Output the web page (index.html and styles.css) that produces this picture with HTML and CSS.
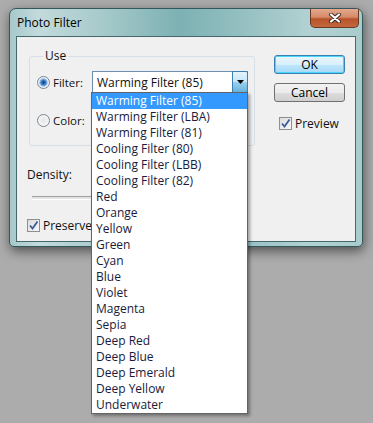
FILE: index.html
```html
<!DOCTYPE html>
<html lang="en">
<head>
    <meta charset="UTF-8">
    <title>Photo Filter</title>
    <link rel="stylesheet" href="styles.css">
</head>
<body>
    <div class="window">
        <div class="titlebar">
            <span class="title">Photo Filter</span>
            <button class="close-button">
                <svg width="12" height="10" viewBox="0 0 12 10">
                    <path d="M2 1.5 L10 8.5 M10 1.5 L2 8.5" stroke="#3a2a24" stroke-width="4" stroke-linecap="round"/>
                    <path d="M2 1.5 L10 8.5 M10 1.5 L2 8.5" stroke="#fff" stroke-width="2.2" stroke-linecap="round"/>
                </svg>
            </button>
        </div>

        <div class="client">
            <div class="left-column">
                <fieldset class="group">
                    <legend>Use</legend>
                    <div class="option-row">
                        <span class="radio checked"></span>
                        <span class="option-label">Filter:</span>
                        <div class="combo">
                            <span class="combo-value">Warming Filter (85)</span>
                            <span class="combo-button">
                                <svg width="7" height="4" viewBox="0 0 7 4"><path d="M0 0 H7 L3.5 4 Z" fill="#000"/></svg>
                            </span>
                            <ul class="combo-list">
                                <li class="selected">Warming Filter (85)</li>
                                <li>Warming Filter (LBA)</li>
                                <li>Warming Filter (81)</li>
                                <li>Cooling Filter (80)</li>
                                <li>Cooling Filter (LBB)</li>
                                <li>Cooling Filter (82)</li>
                                <li>Red</li>
                                <li>Orange</li>
                                <li>Yellow</li>
                                <li>Green</li>
                                <li>Cyan</li>
                                <li>Blue</li>
                                <li>Violet</li>
                                <li>Magenta</li>
                                <li>Sepia</li>
                                <li>Deep Red</li>
                                <li>Deep Blue</li>
                                <li>Deep Emerald</li>
                                <li>Deep Yellow</li>
                                <li>Underwater</li>
                            </ul>
                        </div>
                    </div>
                    <div class="option-row second">
                        <span class="radio"></span>
                        <span class="option-label">Color:</span>
                    </div>
                </fieldset>

                <div class="density-label">Density:</div>
                <div class="slider"><div class="slider-track"></div></div>

                <label class="check-row preserve">
                    <span class="checkbox">
                        <svg width="11" height="11" viewBox="0 0 11 11"><path d="M2 5.5 L4.5 8.5 L9.5 1.5" stroke="#3d5a9c" stroke-width="1.8" fill="none"/></svg>
                    </span>
                    Preserve
                </label>
            </div>

            <div class="right-column">
                <button class="dialog-button default">OK</button>
                <button class="dialog-button">Cancel</button>
                <label class="check-row preview">
                    <span class="checkbox">
                        <svg width="11" height="11" viewBox="0 0 11 11"><path d="M2 5.5 L4.5 8.5 L9.5 1.5" stroke="#3d5a9c" stroke-width="1.8" fill="none"/></svg>
                    </span>
                    Preview
                </label>
            </div>
        </div>
    </div>
</body>
</html>
```

FILE: styles.css
```css
html {
    background: #acacac;
}
body {
    margin: 0;
    min-height: 100vh;
    font-family: "Open Sans", "Noto Sans", sans-serif;
    font-size: 11.5px;
    color: #111;
}
.window {
    box-sizing: border-box;
    width: 354px;
    height: 239px;
    margin: 8px 0 0 9px;
    padding: 0 6px 4px 6px;
    border: 1px solid #33575a;
    border-radius: 7px 7px 5px 5px;
    background: linear-gradient(90deg, #a6c9ca 0%, #c2dadb 8%, #a9cbcc 25%, #7db1b3 48%, #8fbcbe 62%, #b2d1d2 85%, #a9cbcc 100%);
    box-shadow: 1px 4px 12px rgba(0, 0, 0, 0.55);
    display: flex;
    flex-direction: column;
}
.titlebar {
    height: 27px;
    display: flex;
    align-items: center;
    justify-content: space-between;
}
.title {
    padding-left: 1px;
    font-size: 12px;
    color: #000;
}
.close-button {
    align-self: flex-start;
    width: 49px;
    height: 19px;
    margin-right: -3px;
    padding: 0;
    border: 1px solid #6a3a26;
    border-top: none;
    border-radius: 0 0 5px 5px;
    background: linear-gradient(#e3a98f 0%, #d48a68 45%, #b8532a 55%, #c4673c 100%);
    display: flex;
    align-items: center;
    justify-content: center;
}
.client {
    box-sizing: border-box;
    height: 206px;
    border: 1px solid #44686b;
    background: #f0f0f0;
    display: flex;
}
.left-column {
    padding-left: 10px;
    width: 228px;
}
.group {
    box-sizing: border-box;
    width: 226px;
    margin: 11px 0 0 2px;
    padding: 7px 6px 14px 7px;
    border: 1px solid #d5dfe5;
    border-radius: 3px;
}
.group legend {
    margin-left: 6px;
    padding: 0 2px;
    line-height: 16px;
    font-size: 12px;
}
.option-row {
    height: 22px;
    display: flex;
    align-items: center;
}
.option-row.second {
    margin-top: 16px;
}
.radio {
    box-sizing: border-box;
    width: 13px;
    height: 13px;
    border: 1px solid #7b8590;
    border-radius: 50%;
    background: radial-gradient(circle, #e6e6e6 0%, #f6f6f6 70%);
}
.radio.checked {
    background: radial-gradient(circle, #1b3a6e 0%, #2f6fbf 25%, #7db2e6 45%, #eef2f6 60%);
}
.option-label {
    width: 39px;
    margin-left: 3px;
}
.combo {
    position: relative;
    box-sizing: border-box;
    width: 156px;
    height: 22px;
    border: 1px solid #6d8fb0;
    background: #fff;
    display: flex;
    align-items: center;
}
.combo-value {
    flex: 1;
    padding-left: 4px;
    font-size: 12px;
}
.combo-button {
    box-sizing: border-box;
    width: 16px;
    height: 22px;
    margin: -1px -1px -1px 0;
    border: 1px solid #3c7fb1;
    border-radius: 0 2px 2px 0;
    background: linear-gradient(#e5f4fc 0%, #c4e5f6 50%, #98d1ef 51%, #68b3db 100%);
    display: flex;
    align-items: center;
    justify-content: center;
}
.combo-list {
    position: absolute;
    top: 100%;
    left: -2px;
    z-index: 2;
    box-sizing: border-box;
    width: 157px;
    margin: 0;
    padding: 0;
    list-style: none;
    border: 1px solid #646464;
    background: #fff;
    box-shadow: 2px 2px 3px rgba(0, 0, 0, 0.35);
    font-size: 12px;
    color: #1a1a3a;
}
.combo-list li {
    height: 16px;
    line-height: 16px;
    padding-left: 4px;
    white-space: nowrap;
}
.combo-list li.selected {
    background: #3399ff;
    color: #fff;
}
.density-label {
    margin-top: 21px;
    line-height: 16px;
    font-size: 12px;
}
.slider {
    margin: 13px 0 0 5px;
    width: 200px;
}
.slider-track {
    box-sizing: border-box;
    height: 4px;
    border-top: 1px solid #a0a0a0;
    border-bottom: 1px solid #fff;
    background: #e3e3e3;
}
.check-row {
    display: flex;
    align-items: center;
    gap: 3px;
    font-size: 12px;
    white-space: nowrap;
}
.preserve {
    margin-top: 17px;
}
.checkbox {
    box-sizing: border-box;
    width: 13px;
    height: 13px;
    border: 1px solid #8e8f8f;
    background: linear-gradient(135deg, #dcdcdc, #f8f8f8);
    display: flex;
    align-items: center;
    justify-content: center;
}
.right-column {
    margin-left: 19px;
    padding-top: 18px;
    display: flex;
    flex-direction: column;
}
.dialog-button {
    box-sizing: border-box;
    width: 71px;
    height: 19px;
    padding: 0;
    border: 1px solid #707070;
    border-radius: 3px;
    background: linear-gradient(#f2f2f2 0%, #ebebeb 50%, #dddddd 51%, #cfcfcf 100%);
    font-family: inherit;
    font-size: 12px;
    color: #000;
}
.dialog-button + .dialog-button {
    margin-top: 9px;
}
.dialog-button.default {
    border-color: #3c7fb1;
    box-shadow: inset 0 0 0 1px #48d6fb;
    background: linear-gradient(#eaf6fd 0%, #d9f0fc 50%, #bee6fd 51%, #a7d9f5 100%);
}
.preview {
    margin: 13px 0 0 5px;
}
```
